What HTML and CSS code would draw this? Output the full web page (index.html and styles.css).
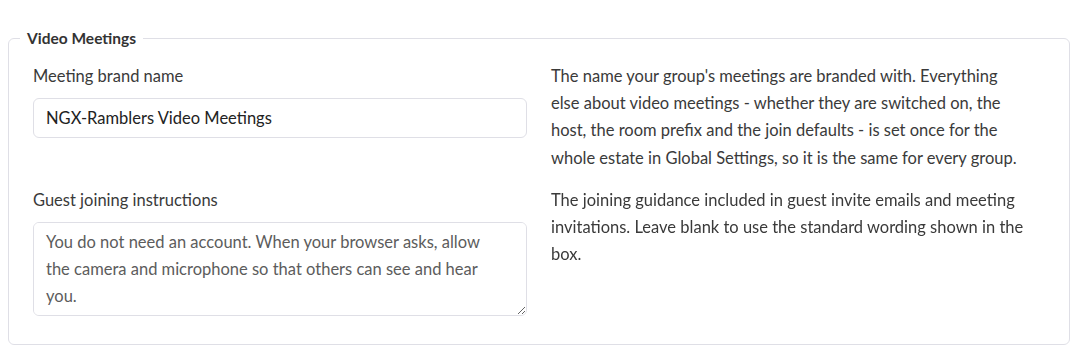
FILE: index.html
```html
<!DOCTYPE html>
<html lang="en">
<head>
    <meta charset="UTF-8">
    <meta name="viewport" content="width=device-width, initial-scale=1.0">
    <title>Video Meetings</title>
    <link rel="stylesheet" href="styles.css">
</head>
<body>
    <fieldset class="settings-box">
        <legend class="settings-title">Video Meetings</legend>
        <div class="settings-row">
            <div class="field">
                <label class="field-label" for="brand-name">Meeting brand name</label>
                <input class="field-input" id="brand-name" type="text" value="NGX-Ramblers Video Meetings">
            </div>
            <p class="field-help">The name your group's meetings are branded with. Everything else about video meetings - whether they are switched on, the host, the room prefix and the join defaults - is set once for the whole estate in Global Settings, so it is the same for every group.</p>
        </div>
        <div class="settings-row">
            <div class="field">
                <label class="field-label" for="guest-text">Guest joining instructions</label>
                <textarea class="field-input field-textarea" id="guest-text" rows="3" placeholder="You do not need an account. When your browser asks, allow the camera and microphone so that others can see and hear you."></textarea>
            </div>
            <p class="field-help">The joining guidance included in guest invite emails and meeting invitations. Leave blank to use the standard wording shown in the box.</p>
        </div>
    </fieldset>
</body>
</html>
```

FILE: styles.css
```css
body {
    margin: 8px;
    background: #fff;
    font-family: 'Lato', 'Liberation Sans', sans-serif;
    font-size: 16.5px;
    color: #3a3a3a;
}

.settings-box {
    margin: 21px 0 0;
    padding: 16px 24px 28px;
    border: 1px solid #dfdfe6;
    border-radius: 6px;
}

.settings-title {
    margin-left: -13px;
    padding: 0 7px;
    font-size: 15.5px;
    font-weight: bold;
    color: #333;
}

.settings-row {
    display: grid;
    grid-template-columns: 494px 474px;
    column-gap: 24px;
    margin-bottom: 15px;
}

.settings-row:last-child {
    margin-bottom: 0;
}

.field {
    display: flex;
    flex-direction: column;
}

.field-label {
    line-height: 27px;
    margin-bottom: 8px;
    color: #3a3a3a;
}

.field-input {
    box-sizing: border-box;
    height: 40px;
    padding: 6px 12px;
    border: 1px solid #dfdfe6;
    border-radius: 6px;
    font-family: inherit;
    font-size: 16.5px;
    color: #222;
    background: #fff;
}

.field-textarea {
    height: 94px;
    padding: 6px 36px 6px 12px;
    line-height: 27px;
    resize: vertical;
}

.field-textarea::placeholder {
    color: #5c5c5c;
    opacity: 1;
}

.field-help {
    margin: 0;
    line-height: 27.2px;
    color: #3a3a3a;
}
```
